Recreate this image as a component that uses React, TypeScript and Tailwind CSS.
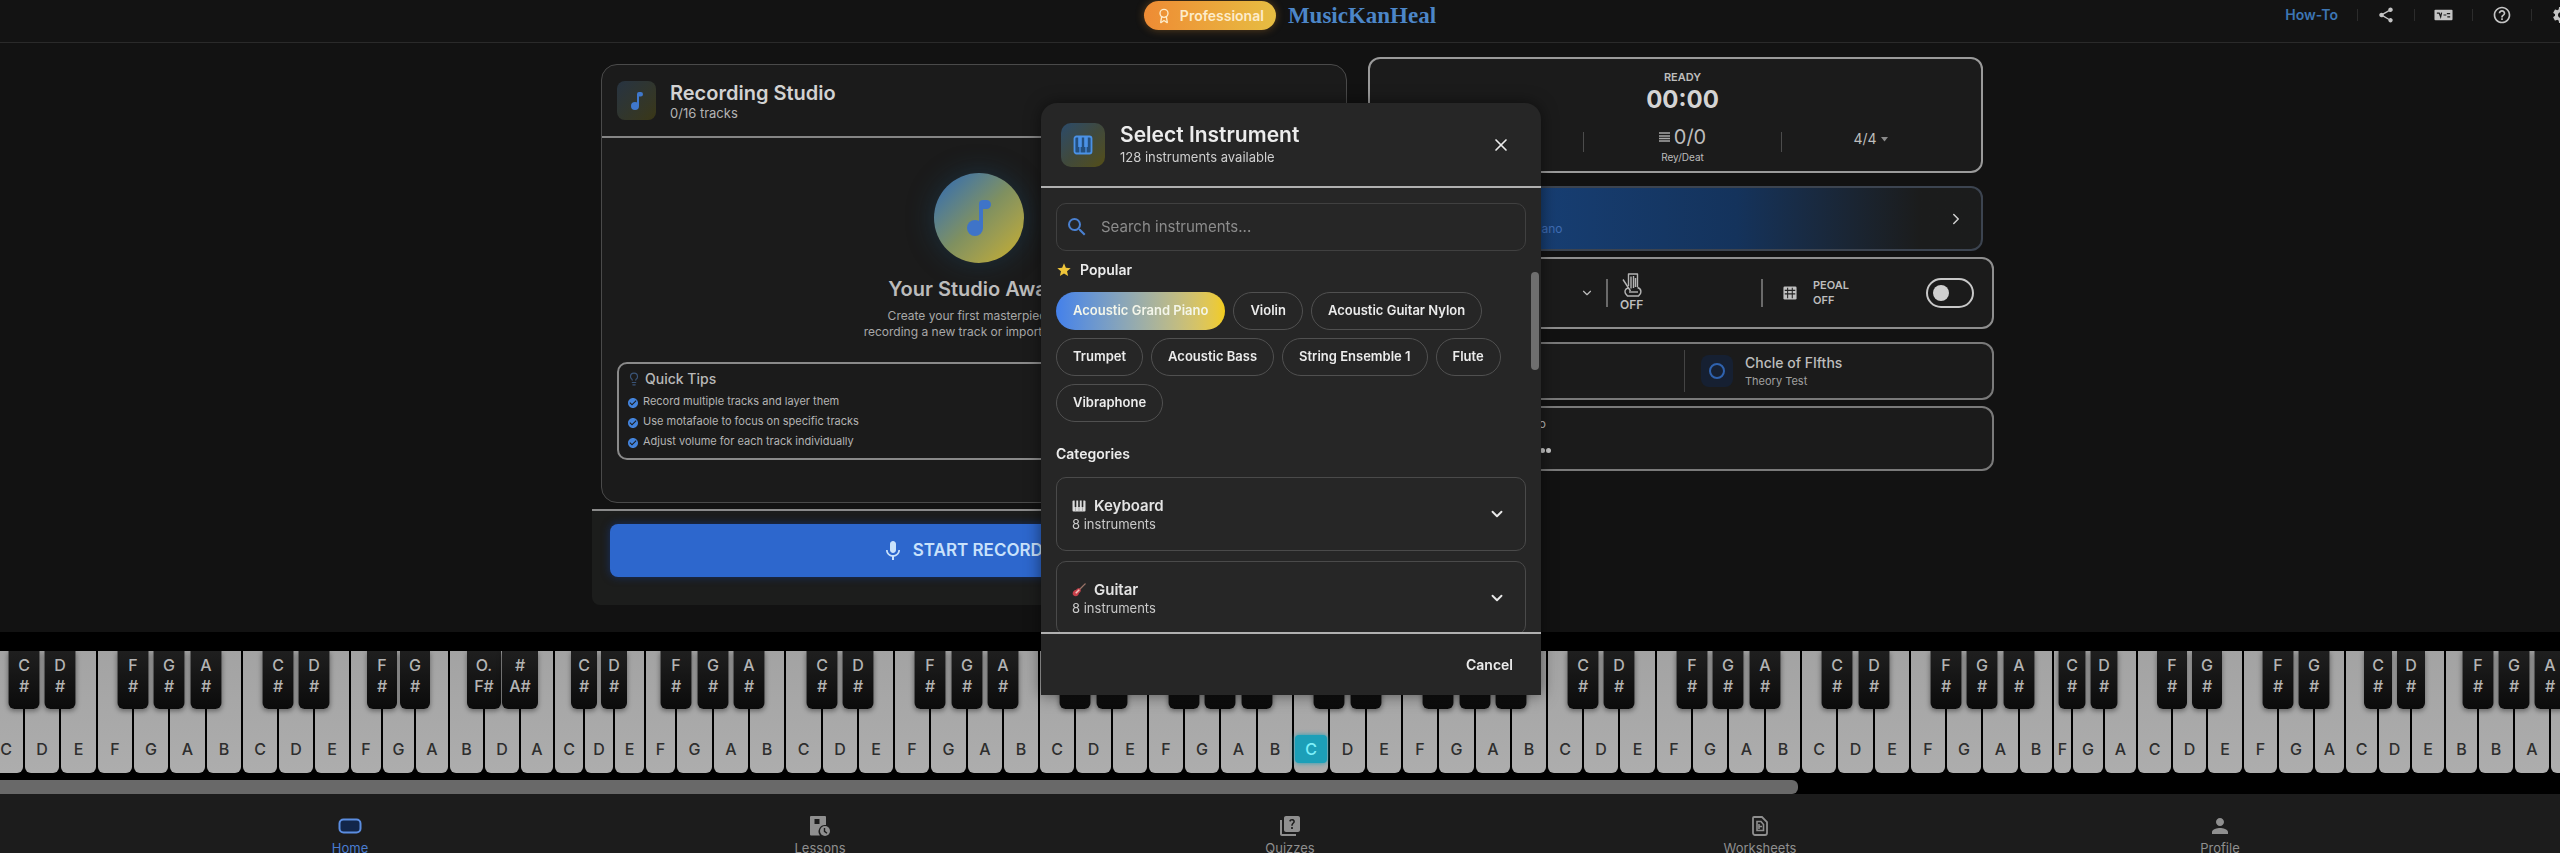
import React from "react";
import { Award, ChevronDown, ChevronRight, Lightbulb, X } from "lucide-react";
import {
  MdCheckCircle,
  MdHelpOutline,
  MdMic,
  MdPerson,
  MdQuiz,
  MdSearch,
  MdSettings,
  MdShare,
  MdStar,
} from "react-icons/md";

interface PianoKey {
  note: string;
  width: number;
  sharp?: [string, string];
  sharpWidth?: number;
  active?: boolean;
}

const octave = (notes: string, widths: number[], sharps: string, sharpWidth = 31): PianoKey[] =>
  notes.split("").map((note, i) => ({
    note,
    width: widths[i],
    sharp: sharps[i] && sharps[i] !== "-" ? [sharps[i], "#"] : undefined,
    sharpWidth,
  }));

const keys: PianoKey[] = [
  ...octave("CDEFGAB", [36, 36, 37, 36, 36, 37, 36], "CD-FGA-"),
  ...octave("CDE", [36, 36, 36], "CD-"),
  ...octave("FG", [32, 33], "FG", 30),
  { note: "A", width: 34 },
  { note: "B", width: 35, sharp: ["O.", "F#"], sharpWidth: 34 },
  { note: "D", width: 36, sharp: ["#", "A#"], sharpWidth: 36 },
  { note: "A", width: 34 },
  ...octave("CDE", [30, 30, 31], "CD-", 26),
  ...octave("FGAB", [31, 37, 36, 36], "FGA-"),
  ...octave("CDEFGAB", [37, 36, 36, 36, 37, 36, 36], "CD-FGA-"),
  ...octave("CDEFGAB", [36, 37, 36, 36, 36, 37, 36], "CD-FGA-"),
  { note: "C", width: 36, sharp: ["C", "#"], active: true },
  ...octave("DEFGAB", [37, 36, 36, 37, 36, 36], "D-FGA-"),
  ...octave("CDEFGAB", [36, 36, 37, 36, 36, 37, 36], "CD-FGA-"),
  ...octave("CDEFGAB", [36, 37, 36, 36, 36, 37, 34], "CD-FGA-"),
  ...octave("FGA", [19, 32, 33], "CD-", 27),
  ...octave("CDE", [35, 35, 36], "FG-", 30),
  ...octave("FGA", [35, 36, 31], "FG-", 31),
  ...octave("CDE", [33, 33, 34], "CD-", 28),
  ...octave("BBAB", [33, 36, 36, 36], "FGA-"),
];

const tips = [
  "Record multiple tracks and layer them",
  "Use motafaole to focus on specific tracks",
  "Adjust volume for each track individually",
];

const popular = [
  "Acoustic Grand Piano",
  "Violin",
  "Acoustic Guitar Nylon",
  "Trumpet",
  "Acoustic Bass",
  "String Ensemble 1",
  "Flute",
  "Vibraphone",
];

const NoteGlyph = ({ className }: { className: string }) => (
  <svg viewBox="0 0 24 36" className={className} fill="currentColor" aria-hidden="true">
    <circle cx="8" cy="28" r="8" />
    <path d="M12 4a4 4 0 0 1 4-4h3.500a4.500 4.500 0 0 1 0 9H16v19h-4z" />
  </svg>
);

const PianoGlyph = () => (
  <svg viewBox="0 0 20 20" className="w-5 h-5" aria-hidden="true">
    <rect x="1.500" y="1.500" width="17" height="17" rx="2" fill="#24507f" stroke="#4b92e6" strokeWidth="1.800" />
    <path d="M7 2v10M13 2v10" stroke="#4b92e6" strokeWidth="3.600" />
    <path d="M7 12v6M13 12v6" stroke="#4b92e6" strokeWidth="1.200" />
  </svg>
);

const KeyboardGlyph = () => (
  <svg viewBox="0 0 14 12" className="w-[14px] h-3" aria-hidden="true">
    <rect x="0.500" y="0.500" width="13" height="11" rx="1" fill="#dcdcdc" />
    <path d="M3.500 0v7M7 0v7M10.500 0v7" stroke="#262626" strokeWidth="1.600" />
    <path d="M3.500 7v5M7 7v5M10.500 7v5" stroke="#8a8a8a" strokeWidth="0.600" />
  </svg>
);

const GuitarGlyph = () => (
  <svg viewBox="0 0 16 16" className="w-[14px] h-[14px]" aria-hidden="true">
    <path d="M8 8 15 1" stroke="#9a7468" strokeWidth="1.600" strokeLinecap="round" />
    <path
      d="M2 9c1.500-1.500 2.500-.6 3.600-2.200C6.600 5.500 9 6 9.600 7.200c.8 1.500.4 3-1 3.800-1.400.8-.6 2-2 3.300-1.500 1.400-3.800 1-5-.3S.5 10.500 2 9Z"
      fill="#c8404a"
    />
    <path d="m4.300 11.700 4-4" stroke="#f0c4bc" strokeWidth="1.800" />
  </svg>
);

const StickGlyph = () => (
  <svg viewBox="0 0 20 24" className="w-5 h-6" fill="none" stroke="#b4b4b4" strokeWidth="1.400" strokeLinejoin="round" aria-hidden="true">
    <path d="M6.500 13V1h9v13M9 3.500v12M11.500 3v12M13.500 5v9" />
    <path d="M1 6.500 8.500 18M6 15c-3 1-3.500 3-2.500 5.500l2 2.500h11l2-2.500c1-3 0-5-3-6" />
    <path d="M7 19h9" />
  </svg>
);

const PedalGlyph = () => (
  <svg viewBox="0 0 16 16" className="w-[14px] h-[14px]" aria-hidden="true">
    <rect x="0.500" y="0.500" width="15" height="15" rx="1.500" fill="#c0c0c0" />
    <path d="M5.300 2v12M10.600 2v12M2 5h12M2 9h12" stroke="#222" strokeWidth="1.200" />
  </svg>
);

const ShortcutGlyph = () => (
  <svg viewBox="0 0 20 12" className="w-[19px] h-3" aria-hidden="true">
    <rect x="0.500" y="0.500" width="19" height="11" rx="1" fill="#c4c4c4" />
    <path d="M3 4h2.500L7 8l1-4.500M10 6h3M13.500 4.500h3.500M14 8h3" stroke="#1a1a1a" strokeWidth="1.300" fill="none" />
  </svg>
);

const HomeGlyph = () => (
  <svg viewBox="0 0 24 16" className="w-6 h-4" aria-hidden="true">
    <rect x="1.500" y="1.500" width="21" height="13" rx="4" fill="#12264a" stroke="#5b8de0" strokeWidth="2" />
  </svg>
);

const LessonsGlyph = () => (
  <svg viewBox="0 0 20 20" className="w-5 h-5" aria-hidden="true">
    <path d="M1 0h14a1 1 0 0 1 1 1v8a6.500 6.500 0 0 0-6 10.500H1a1 1 0 0 1-1-1V1a1 1 0 0 1 1-1Z" fill="#8f8f8f" />
    <path d="M4.500 3h5v5h-5z" fill="#1c1c1c" />
    <circle cx="15" cy="15" r="5" fill="#8f8f8f" />
    <path d="M14.500 12v3.300l2.500 2" stroke="#1c1c1c" strokeWidth="1.400" fill="none" />
  </svg>
);

const WorksheetsGlyph = () => (
  <svg viewBox="0 0 16 20" className="w-4 h-5" fill="none" stroke="#8f8f8f" aria-hidden="true">
    <path d="M2 1h8l5 5v11a2 2 0 0 1-2 2H3a2 2 0 0 1-2-2V2a1 1 0 0 1 1-1Z" strokeWidth="1.800" />
    <path d="M5 5.500h4l2.500 3v6H5z" strokeWidth="1.600" />
    <path d="M7 8v5M7 10.500h3" strokeWidth="1.600" />
  </svg>
);

const navItems = [
  { label: "Home", icon: <HomeGlyph />, active: true },
  { label: "Lessons", icon: <LessonsGlyph /> },
  { label: "Quizzes", icon: <MdQuiz className="w-6 h-6" /> },
  { label: "Worksheets", icon: <WorksheetsGlyph /> },
  { label: "Profile", icon: <MdPerson className="w-6 h-6" /> },
];

const Header = () => (
  <header className="grid grid-cols-[1fr_auto_1fr] items-start h-[43px] shrink-0 pl-5 border-b border-[#2a2a2a] bg-[#131313]">
    <div />
    <div className="flex items-center gap-3 pt-px">
      <span className="flex items-center gap-2 h-[29px] px-3 rounded-full bg-gradient-to-r from-[#ee8b34] to-[#e6bd42] text-[#fdeccb] text-sm font-semibold shadow-[0_0_8px_rgba(230,150,50,0.35)]">
        <Award className="w-4 h-4" />
        Professional
      </span>
      <span className="font-['Liberation_Serif',serif] font-bold text-[23px] leading-[29px] text-[#4c86c8]">
        MusicKanHeal
      </span>
    </div>
    <nav className="justify-self-end flex items-center gap-[19px] h-[30px] -mr-[11px] text-[#c4c4c4]">
      <a href="#how-to" className="text-sm font-semibold text-[#3d76b4]">How-To</a>
      <span className="w-px h-3 bg-[#2c2c2c]" />
      <button aria-label="Share"><MdShare className="w-[18px] h-[18px]" /></button>
      <span className="w-px h-3 bg-[#2c2c2c]" />
      <button aria-label="Shortcuts"><ShortcutGlyph /></button>
      <span className="w-px h-3 bg-[#2c2c2c]" />
      <button aria-label="Help"><MdHelpOutline className="w-5 h-5" /></button>
      <span className="w-px h-3 bg-[#2c2c2c]" />
      <button aria-label="Settings"><MdSettings className="w-5 h-5" /></button>
    </nav>
  </header>
);

const RecordingStudio = () => (
  <section className="pt-[21px]">
    <div className="ml-[9px] mr-[21px] h-[439px] rounded-2xl border border-[#4a4a4a] bg-[#1b1b1b]">
      <div className="flex items-center gap-[14px] h-[73px] px-[15px] border-b-2 border-[#858585]">
        <div className="flex items-center justify-center w-[39px] h-[39px] rounded-lg bg-gradient-to-br from-[#273341] to-[#3a3715]">
          <NoteGlyph className="w-3 h-[18px] text-[#3f78cc]" />
        </div>
        <div>
          <h2 className="text-xl leading-6 font-semibold text-[#d2d2d2]">Recording Studio</h2>
          <p className="text-[13px] leading-4 text-[#b4b4b4]">0/16 tracks</p>
        </div>
      </div>

      <div className="flex flex-col items-center pt-[35px] pl-[10px] text-center">
        <div className="flex items-center justify-center w-[90px] h-[90px] rounded-full bg-gradient-to-br from-[#2c65b4] via-[#7f9060] to-[#cbb01c] shadow-[0_0_28px_rgba(30,90,130,0.35)]">
          <NoteGlyph className="w-6 h-9 text-[#3f74c8]" />
        </div>
        <h3 className="mt-3 text-xl leading-7 font-semibold text-[#bcbcbc]">Your Studio Awaits</h3>
        <p className="mt-[5px] text-xs leading-4 text-[#a8a8a8]">
          Create your first masterpiece by
          <br />
          recording a new track or importing audio
        </p>
      </div>

      <div className="mt-[22px] mx-[15px] h-[98px] rounded-[10px] border-2 border-[#8a8a8a] px-2 pt-[3px]">
        <h4 className="flex items-center gap-1 h-6 text-sm font-medium text-[#b8b8b8]">
          <Lightbulb className="w-[14px] h-[14px] text-[#3a5478]" />
          Quick Tips
        </h4>
        <ul className="text-[11px] text-[#b4b4b4]">
          {tips.map((tip) => (
            <li key={tip} className="flex items-center gap-1 h-5">
              <MdCheckCircle className="w-3 h-3 mt-1 text-[#4484dc]" />
              {tip}
            </li>
          ))}
        </ul>
      </div>
    </div>

    <div className="mt-[6px] h-24 px-[18px] pt-[13px] rounded-b-lg border-t-2 border-[#8a8a8a] bg-[#1c1d1c]">
      <button className="flex items-center justify-center gap-2 w-full h-[53px] pr-[6px] rounded-lg bg-[#2d67cd] text-[#c9e2fb] text-[17px] font-semibold shadow-[0_0_8px_rgba(20,60,150,0.6)]">
        <MdMic className="w-6 h-6" />
        START RECORDING
      </button>
    </div>
  </section>
);

const Transport = () => (
  <section className="flex flex-col pt-[14px] text-[#bdbdbd]">
    <div className="mr-[11px] h-[116px] rounded-xl border-2 border-[#9a9a9a] bg-[#1b1b1b] pt-[10px] pl-[14px]">
      <div className="text-center">
        <p className="text-[11px] leading-4 font-semibold">READY</p>
        <p className="text-2xl leading-[30px] font-bold text-[#d4d4d4]">00:00</p>
      </div>
      <div className="grid grid-cols-3 items-start pt-[10px]">
        <div className="h-6" />
        <div className="relative text-center">
          <span className="absolute left-0 top-[7px] w-px h-5 bg-[#4c4c4c]" />
          <span className="absolute right-0 top-[7px] w-px h-5 bg-[#4c4c4c]" />
          <p className="flex items-center justify-center gap-1 text-xl leading-6">
            <svg viewBox="0 0 11 10" className="w-[11px] h-[10px]" stroke="#a8a8a8" strokeWidth="1.500" aria-hidden="true">
              <path d="M0 1h11M0 4h11M0 6.500h11M0 9h11" />
            </svg>
            0/0
          </p>
          <p className="text-[10px] leading-4">Rey/Deat</p>
        </div>
        <button className="flex items-center justify-center gap-1 h-7 pr-[22px] text-sm">
          4/4
          <svg viewBox="0 0 7 5" className="w-[7px] h-[5px]" fill="#8a8a8a" aria-hidden="true">
            <path d="M0 0h7L3.500 4.500z" />
          </svg>
        </button>
      </div>
    </div>

    <button className="flex items-center mt-[13px] mr-[11px] h-[65px] rounded-xl border-2 border-[#3c4450] bg-gradient-to-r from-[#18447f] from-10% via-[#14335c] via-60% to-[#1b1c1c] to-90% pl-[70px] pr-4 text-left">
      <span className="flex-1 pt-5 text-xs text-[#3f6cb4]">Acoustic Grand Piano</span>
      <ChevronRight className="w-[18px] h-[18px] text-[#d0d0d0]" />
    </button>

    <div className="grid grid-cols-[236px_155px_1fr] items-center mt-[6px] h-[72px] rounded-xl border-2 border-[#8e8e8e] bg-[#1b1b1b]">
      <ChevronDown className="justify-self-end mr-3 w-[14px] h-[14px]" />
      <div className="flex items-center h-7 border-l-2 border-[#6a6a6a] pl-3">
        <div className="flex flex-col items-center text-xs leading-4 font-semibold">
          <StickGlyph />
          OFF
        </div>
      </div>
      <label className="flex items-center h-7 border-l-2 border-[#6a6a6a] pl-5 pr-[18px]">
        <PedalGlyph />
        <span className="flex-1 pl-4 text-[11px] leading-[15px] font-semibold">
          PEOAL
          <br />
          OFF
        </span>
        <input type="checkbox" role="switch" className="peer sr-only" />
        <span className="flex items-center w-12 h-[30px] px-[5px] rounded-full border-2 border-[#c8c8c8]">
          <span className="w-4 h-4 rounded-full bg-[#cfcfcf]" />
        </span>
      </label>
    </div>

    <div className="grid grid-cols-[314px_1fr] items-center mt-[13px] h-[58px] rounded-xl border-2 border-[#7a7a7a] bg-[#1b1b1b]">
      <div />
      <div className="flex items-center gap-3 h-[42px] border-l border-[#444] pl-4">
        <div className="flex items-center justify-center w-8 h-8 rounded-lg bg-[#162032]">
          <span className="w-4 h-4 rounded-full border-2 border-[#2f62ae]" />
        </div>
        <div>
          <p className="text-sm leading-5 font-medium">Chcle of FIfths</p>
          <p className="text-[11px] leading-4 text-[#a0a0a0]">Theory Test</p>
        </div>
      </div>
    </div>

    <div className="mt-[6px] h-[65px] rounded-xl border-2 border-[#7a7a7a] bg-[#1b1b1b] pt-2 pl-[137px]">
      <p className="text-xs leading-4">Tempo</p>
      <div className="flex gap-px pt-4 pl-[21px]">
        {[0, 1, 2, 3].map((dot) => (
          <span key={dot} className="w-[5px] h-[5px] rounded-full bg-[#c8c8c8]" />
        ))}
      </div>
    </div>
  </section>
);

const Piano = () => (
  <section className="shrink-0 overflow-hidden bg-black pt-[19px]">
    <div className="flex h-[122px] -ml-[11px]">
      {keys.map((key, i) => (
        <div key={i} className="relative shrink-0 h-full" style={{ width: key.width }}>
          <div className="flex items-end justify-center h-full mr-[2px] pb-3 rounded-b-md bg-gradient-to-b from-[#a3a3a3] to-[#adadad]">
            <span
              className={
                key.active
                  ? "flex items-center justify-center w-8 h-7 -mb-[2px] rounded bg-[#1c9fb8] text-[#7df0fa] text-base font-medium shadow-[0_0_5px_#1c9fb8]"
                  : "text-base leading-6 font-medium text-[#2e2e2e]"
              }
            >
              {key.note}
            </span>
          </div>
          {key.sharp && (
            <div
              className="absolute top-0 right-px z-10 translate-x-1/2 h-[58px] pt-1 rounded-b-md bg-gradient-to-b from-[#1f1f1f] to-[#0b0b0b] text-center text-base leading-[21px] font-medium text-[#b4b4b4] shadow-[0_2px_5px_rgba(0,0,0,0.4)]"
              style={{ width: key.sharpWidth ?? 31 }}
            >
              {key.sharp[0]}
              <br />
              {key.sharp[1]}
            </div>
          )}
        </div>
      ))}
    </div>
    <div className="mt-[7px] h-[14px]">
      <div className="w-[70.25%] h-full rounded-r-md bg-[#696969]" />
    </div>
  </section>
);

const BottomNav = () => (
  <nav className="grid grid-cols-[47fr_47fr_47fr_47fr_45fr] shrink-0 h-[59px] overflow-hidden bg-[#1c1c1c] px-[115px] pt-5">
    {navItems.map((item) => (
      <a
        key={item.label}
        href={`#${item.label.toLowerCase()}`}
        className={`flex flex-col items-center gap-[2px] text-[13px] leading-4 ${item.active ? "text-[#4a7cd0]" : "text-[#8f8f8f]"}`}
      >
        <span className="flex items-center justify-center h-6 shrink-0">{item.icon}</span>
        {item.label}
      </a>
    ))}
  </nav>
);

const Category = ({ name, icon }: { name: string; icon: React.ReactNode }) => (
  <button className="flex items-center justify-between shrink-0 w-full h-[74px] pl-[15px] pr-[19px] rounded-[10px] border border-[#4a4a4a] text-left">
    <span>
      <span className="flex items-center gap-2 text-[15px] leading-5 font-semibold text-[#e4e4e4]">
        {icon}
        {name}
      </span>
      <span className="block text-[13px] leading-4 text-[#cacaca]">8 instruments</span>
    </span>
    <ChevronDown className="w-[18px] h-[18px] text-[#e8e8e8]" strokeWidth={2.5} />
  </button>
);

const InstrumentDialog = () => (
  <div className="fixed inset-0 z-50 flex items-start justify-center pt-[103px] pl-[22px]">
    <div
      role="dialog"
      aria-labelledby="dialog-title"
      className="flex flex-col w-full max-w-[500px] rounded-t-2xl bg-[#262626] text-[#ececec] shadow-[0_0_16px_rgba(0,0,0,0.5)]"
    >
      <div className="flex items-center h-[85px] pl-5 pr-[30px] border-b-2 border-[#b0b0b0]">
        <div className="flex items-center justify-center w-11 h-11 rounded-[10px] bg-gradient-to-br from-[#2b4a6a] via-[#40493c] to-[#544e12]">
          <PianoGlyph />
        </div>
        <div className="flex-1 pl-[15px]">
          <h2 id="dialog-title" className="text-[21px] leading-6 font-semibold">Select Instrument</h2>
          <p className="text-[13px] leading-5 text-[#cfcfcf]">128 instruments available</p>
        </div>
        <button aria-label="Close"><X className="w-5 h-5" /></button>
      </div>

      <div className="relative px-[15px] pt-[15px] h-[444px] overflow-hidden">
        <label className="flex items-center gap-3 h-12 px-2 rounded-[10px] border border-[#404040]">
          <MdSearch className="w-6 h-6 text-[#4a80d0]" />
          <input
            type="text"
            aria-label="Search instruments"
            placeholder="Search instruments..."
            className="flex-1 bg-transparent text-[15px] outline-none placeholder:text-[#8c8c8c]"
          />
        </label>

        <h3 className="flex items-center gap-2 mt-[7px] h-6 text-sm font-semibold">
          <MdStar className="w-4 h-4 text-[#f0c63a]" />
          Popular
        </h3>
        <div className="flex flex-wrap gap-2 mt-[10px]">
          {popular.map((name, i) => (
            <button
              key={name}
              className={`h-[38px] px-4 rounded-full border text-[13px] font-semibold ${
                i === 0
                  ? "border-transparent bg-gradient-to-r from-[#4480ea] to-[#f2cc18] bg-origin-border text-[#f4f6ea]"
                  : "border-[#505050]"
              }`}
            >
              {name}
            </button>
          ))}
        </div>

        <h3 className="mt-5 text-sm leading-6 font-semibold">Categories</h3>
        <div className="flex flex-col gap-[10px] mt-[11px]">
          <Category name="Keyboard" icon={<KeyboardGlyph />} />
          <Category name="Guitar" icon={<GuitarGlyph />} />
        </div>

        {/* Scrollbar thumb */}
        <div className="absolute top-[84px] right-[2px] w-2 h-[98px] rounded-full bg-[#6e6e6e]" />
      </div>

      <div className="flex items-center justify-end h-[63px] px-7 border-t-2 border-[#b0b0b0]">
        <button className="text-sm font-semibold">Cancel</button>
      </div>
    </div>
  </div>
);

export default function App() {
  return (
    <div className="flex flex-col h-screen overflow-hidden bg-[#121212] font-['Inter',sans-serif]">
      <Header />
      <main className="flex-1 min-h-0 pl-[26px]">
        <div className="grid grid-cols-[776fr_626fr] w-full max-w-[1402px] mx-auto">
          <RecordingStudio />
          <Transport />
        </div>
      </main>
      <Piano />
      <BottomNav />
      <InstrumentDialog />
    </div>
  );
}
